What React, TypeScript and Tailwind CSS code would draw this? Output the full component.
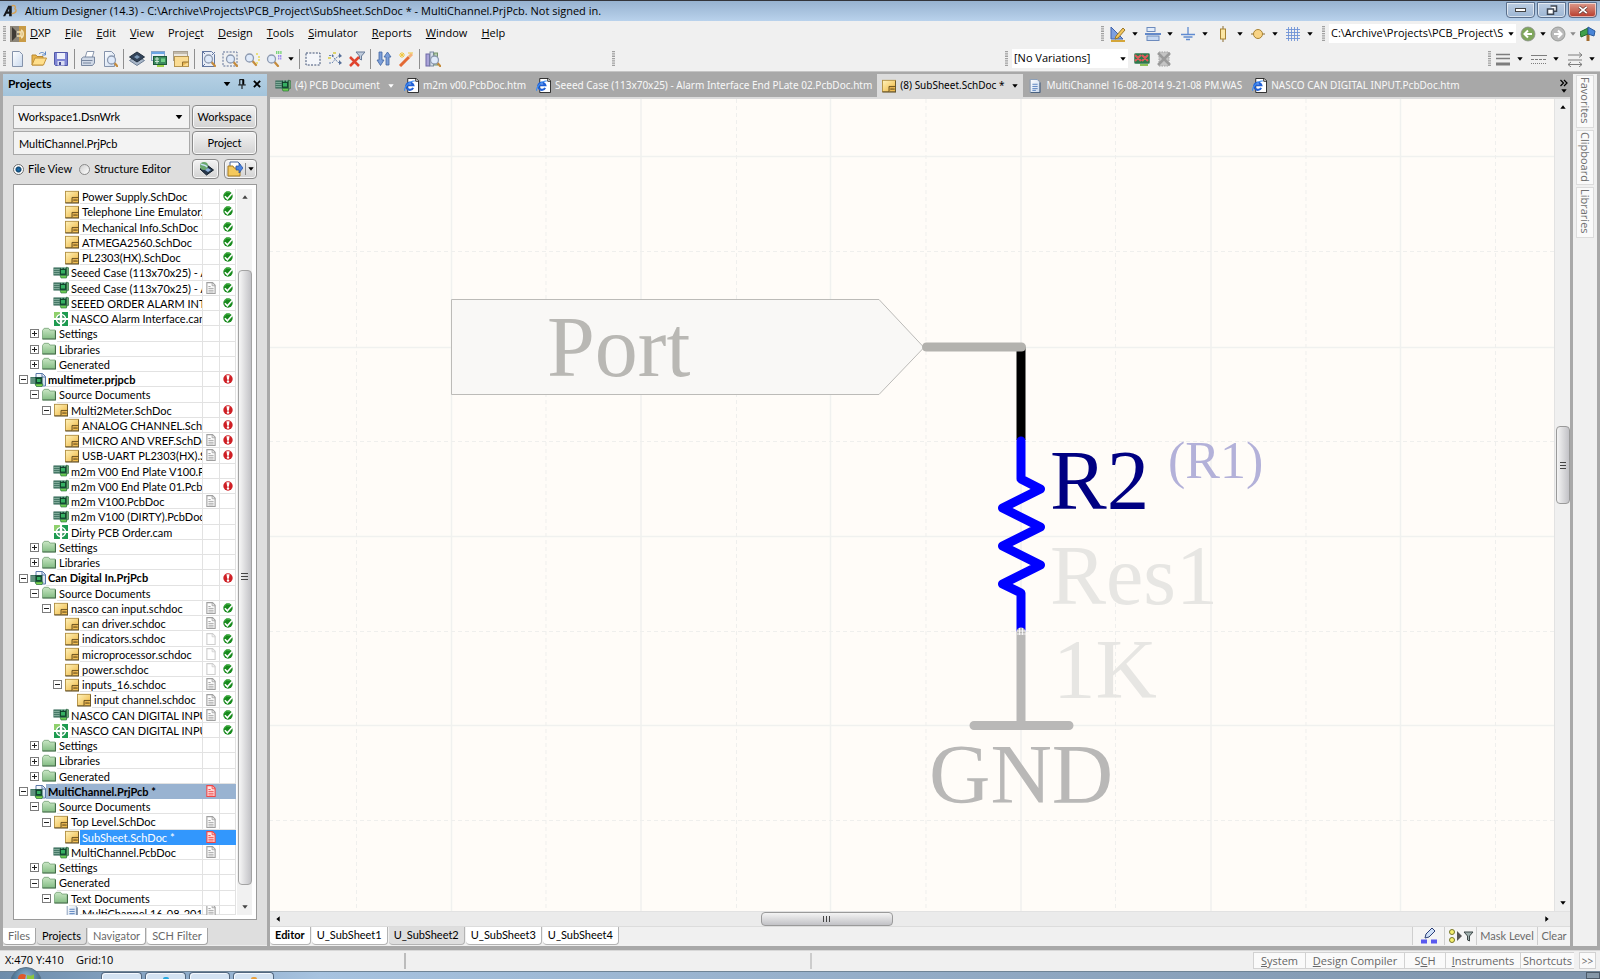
import React, { ReactNode } from "react";

/* ---------- small shared drawings ---------- */

type IconProps = { children: ReactNode; className?: string };

function Icon({ children, className = "h-4 w-4" }: IconProps) {
  return (
    <svg viewBox="0 0 16 16" className={`shrink-0 ${className}`} aria-hidden="true">
      {children}
    </svg>
  );
}

function Caret({ className = "text-black" }: { className?: string }) {
  return (
    <svg viewBox="0 0 6 4" className={`h-1 w-1.5 shrink-0 ${className}`} aria-hidden="true">
      <path d="M0.3 0.3h5.4L3 3.7z" fill="currentColor" />
    </svg>
  );
}

function Grip() {
  return (
    <svg viewBox="0 0 3 16" className="h-4 w-[3px] shrink-0" aria-hidden="true">
      <path d="M1.5 0v16" stroke="#a0a0a0" strokeWidth="3" strokeDasharray="1.3 1" />
    </svg>
  );
}

function Gradients() {
  return (
    <svg className="absolute h-0 w-0" aria-hidden="true">
      <defs>
        <linearGradient id="gold" x1="0" y1="0" x2="1" y2="1">
          <stop offset="0" stopColor="#fff3bd" />
          <stop offset="1" stopColor="#efb53c" />
        </linearGradient>
        <linearGradient id="green" x1="0" y1="0" x2="0" y2="1">
          <stop offset="0" stopColor="#c9e6c4" />
          <stop offset="1" stopColor="#84bd84" />
        </linearGradient>
        <linearGradient id="paper" x1="0" y1="0" x2="1" y2="1">
          <stop offset="0" stopColor="#ffffff" />
          <stop offset="1" stopColor="#c9d9ee" />
        </linearGradient>
        <radialGradient id="orb" cx="0.5" cy="0.3" r="0.7">
          <stop offset="0" stopColor="#8fb4cf" />
          <stop offset="1" stopColor="#1d4a70" />
        </radialGradient>
      </defs>
    </svg>
  );
}

const SheetIcon = () => (
  <Icon className="h-3.5 w-3.5">
    <rect x="0.5" y="1.5" width="15" height="13" fill="url(#gold)" stroke="#b08c3c" />
    <path d="M0.500 14.800h15.200V2" fill="none" stroke="#5d4c28" strokeWidth="1.200" />
    <path d="M8 14.500V8.500h7.500" fill="#e3b050" stroke="#5d471a" />
    <path d="M9.500 11.500h5" stroke="#5d471a" strokeWidth="1.200" />
  </Icon>
);

const BoardIcon = () => (
  <Icon className="h-4 w-4">
    <rect x="0.500" y="2.500" width="14" height="8" fill="#1c5442" />
    <path d="M0.500 4.500h6M0.500 6.500h6M0.500 8.500h6M2 2.500v8M4 2.500v8M6 2.500v8" stroke="#a9ccbd" strokeWidth="0.600" />
    <rect x="7.500" y="4.500" width="5" height="4.500" fill="#35b062" stroke="#0f3a24" strokeWidth="0.800" />
    <path d="M8 3h1.500M11 3h1.500" stroke="#9be0b4" />
    <path d="M13.500 2l2.500 1v7l-2.500 1.500z" fill="#6aa674" stroke="#1f5230" strokeWidth="0.500" />
    <path d="M7 10.500h6.500v2.500H8z" fill="#6ccb52" stroke="#1c6b30" strokeWidth="0.600" />
  </Icon>
);

const ProjectIcon = () => (
  <Icon className="h-4 w-4">
    <path d="M6 1.500h6.500l3 3V14H6z" fill="url(#paper)" stroke="#5a78a8" />
    <path d="M12 1.500v3.500h3.500" fill="none" stroke="#5a78a8" />
    <rect x="0.500" y="5" width="12" height="7" fill="#1c5442" />
    <path d="M0.500 7h5M0.500 9h5M0.500 11h5M2 5v7M4 5v7" stroke="#a9ccbd" strokeWidth="0.600" />
    <rect x="6.500" y="6.500" width="4.500" height="4" fill="#35b062" stroke="#0f3a24" strokeWidth="0.800" />
    <path d="M5 12h8l-1 2.500H6.500z" fill="#7ed44e" stroke="#1c6b30" strokeWidth="0.600" />
  </Icon>
);

const FolderIcon = () => (
  <Icon className="h-3.5 w-3.5">
    <path d="M0.500 13.500v-9.500l2-2.500h5l1.500 2h6v10z" fill="url(#green)" stroke="#7aa67c" />
    <path d="M0.500 13.800h15V4" fill="none" stroke="#3f6b45" strokeWidth="1.200" />
  </Icon>
);

const CamIcon = () => (
  <Icon className="h-3.5 w-3.5">
    <rect width="16" height="16" fill="#1d9b50" />
    <rect width="8" height="8" fill="#8fd06c" />
    <circle cx="8" cy="8" r="6" fill="#ffffff" />
    <path d="M8 0v16M0 8h16" stroke="#fff" strokeWidth="2.500" />
    <path d="M3.500 6.500L6.500 3.500v3zM12.500 6.500L9.500 3.500v3zM3.500 9.500l3 3v-3zM12.500 9.500l-3 3v-3z" fill="#0e7c3c" />
  </Icon>
);

const TextDocIcon = () => (
  <Icon className="h-3.5 w-3.5">
    <path d="M2.500 0.500h8l3 3v12h-11z" fill="url(#paper)" stroke="#7f96b4" />
    <path d="M5 6h6M5 8.500h6M5 11h6M5 13h4" stroke="#4d78b8" />
    <path d="M13.800 4v11.500H3" fill="none" stroke="#3d5573" />
  </Icon>
);

const IeIcon = () => (
  <Icon className="h-[15px] w-[15px]">
    <path d="M4 0.500h9l2.500 2.500v12.500H4z" fill="#fff" stroke="#222" />
    <path d="M12.500 0.500v3h3" fill="none" stroke="#222" />
    <path d="M9.700 10.500A3.900 3.900 0 1 1 10 7.800H3.200" fill="none" stroke="#1e5fd6" strokeWidth="2.200" />
    <path d="M0.800 13.500C-0.500 10.500 6 2.500 11.500 3.200" fill="none" stroke="#3f8df0" strokeWidth="1.200" />
  </Icon>
);

type Mark = "lines" | "blank" | "red";

function MarkIcon({ mark }: { mark: Mark }) {
  const stroke = mark === "red" ? "#f04646" : mark === "blank" ? "#cfcfcf" : "#a0a0a0";
  return (
    <Icon className="h-3 w-3">
      <path d="M2.500 0.800h7.500l3.500 3.500v11h-11z" fill={mark === "red" ? "#ffe4e4" : "#fff"} stroke={stroke} strokeWidth="1.500" />
      <path d="M9.500 1v4h4" fill="none" stroke={stroke} strokeWidth="1.200" />
      {mark !== "blank" && <path d="M4.500 6h3M4.500 8.500h7M4.500 11h7M4.500 13.300h7" stroke={stroke} strokeWidth="1.200" />}
    </Icon>
  );
}

function StatusIcon({ ok }: { ok: boolean }) {
  return ok ? (
    <Icon className="h-2.5 w-2.5">
      <circle cx="8" cy="8" r="7.500" fill="#178a1c" />
      <path d="M3 8.500l4 4L14.500 4" fill="none" stroke="#fff" strokeWidth="2.500" />
      <path d="M2 5a7 7 0 0 1 9-3" fill="none" stroke="#5fc25c" strokeWidth="1.500" />
    </Icon>
  ) : (
    <Icon className="h-2.5 w-2.5">
      <circle cx="8" cy="8" r="7.500" fill="#cf1f25" />
      <path d="M5.500 2h5L9.300 9.300H6.700z" fill="#fff" />
      <circle cx="8" cy="12" r="1.900" fill="#fff" />
    </Icon>
  );
}

/* ---------- toolbar drawings ---------- */

const lens = (
  <>
    <path d="M11.500 11l3.500 4" stroke="#c58b3c" strokeWidth="2.200" strokeLinecap="round" />
    <circle cx="8.500" cy="8" r="4" fill="#dfeafa" stroke="#8d9ab0" strokeWidth="1.300" />
  </>
);

const toolbarGroups: { name: string; art: ReactNode; caret?: boolean }[][] = [
  [
    { name: "New", art: <path d="M3.500 0.500h7l3 3v12h-10z" fill="url(#paper)" stroke="#8593ab" /> },
    {
      name: "Open",
      art: (
        <>
          <path d="M1 14V4h4l1 1.500h6V14z" fill="#e9b54c" stroke="#b98930" />
          <path d="M1 14l3-7h11.500L12.500 14z" fill="#ffdf8c" stroke="#c2923a" />
          <path d="M8 3c2-2 4-2 6 0M14.500 0.500V4H11" fill="none" stroke="#5b87c4" />
        </>
      ),
    },
    {
      name: "Save",
      art: (
        <>
          <path d="M1.500 1.500h13v13h-12l-1-1z" fill="#7f86d4" stroke="#5158a8" />
          <rect x="4" y="2" width="8" height="6" fill="#eef1fb" />
          <rect x="4.500" y="10" width="7" height="4.500" fill="#d9dcf2" />
          <rect x="6" y="11" width="2" height="3" fill="#454b96" />
        </>
      ),
    },
  ],
  [
    {
      name: "Print",
      art: (
        <>
          <path d="M5 7l2-6.500h7L12 7z" fill="#fff" stroke="#8a97ad" />
          <path d="M1.500 7.500l2-1.500h11v6l-2 2.500h-11z" fill="#cfd8e6" stroke="#7887a0" />
          <path d="M1.500 9.500h11M3 12h8" stroke="#7887a0" />
        </>
      ),
    },
    {
      name: "Print Preview",
      art: (
        <>
          <path d="M2.500 0.500h7l3 3v12h-10z" fill="url(#paper)" stroke="#8593ab" />
          <g transform="translate(1 1)">{lens}</g>
        </>
      ),
    },
  ],
  [
    {
      name: "Devices",
      art: (
        <>
          <path d="M0.500 9.500L8 14.500l7.500-5L8 5z" fill="#a8b6c8" stroke="#6f8096" />
          <path d="M0.500 6L8 11l7.500-5L8 1z" fill="#33445a" stroke="#22303f" />
          <path d="M5 6l3-2 3 2-3 2z" fill="#7b99b8" />
        </>
      ),
    },
    {
      name: "Board View",
      art: (
        <>
          <rect x="0.500" y="0.500" width="13" height="9" fill="#e6eefa" stroke="#8aa3c4" />
          <path d="M0.500 2h13" stroke="#6ba6e4" strokeWidth="2" />
          <rect x="2.500" y="5.500" width="13" height="8" fill="#3c8a5e" stroke="#1d5a38" />
          <path d="M4 8h4M4 10.500h4M6 6v7" stroke="#cde6d4" />
          <rect x="10" y="7.500" width="4" height="3.500" fill="#6fd088" />
          <path d="M6 15h7" stroke="#9ccf4a" strokeWidth="2" />
        </>
      ),
    },
    {
      name: "Sheet View",
      art: (
        <>
          <rect x="0.500" y="0.500" width="14" height="9" fill="#ebe7df" stroke="#a89f90" />
          <path d="M1 2h13" stroke="#b3aa9a" strokeWidth="1.500" />
          <rect x="1.500" y="5.500" width="14" height="10" fill="#fbdc93" stroke="#b59450" />
          <path d="M9.500 15v-4h6" fill="#e8b652" stroke="#94712f" />
        </>
      ),
    },
  ],
  [
    {
      name: "Fit Document",
      art: (
        <>
          <path d="M2.500 0.500h9l3 3v12h-12z" fill="#e9eef8" stroke="#6377a0" />
          <path d="M5 3L2 0M12 4l3-3M5 13l-3 3" stroke="#6377a0" />
          {lens}
        </>
      ),
    },
    {
      name: "Zoom Area",
      art: (
        <>
          <rect x="1" y="1" width="14" height="14" fill="none" stroke="#5e7096" strokeDasharray="2 1.300" />
          {lens}
        </>
      ),
    },
    {
      name: "Zoom Selected",
      art: (
        <>
          <g transform="translate(-3 -1)">{lens}</g>
          <path d="M12 3h2M14 6h2M12 12h2M14 9h2" stroke="#e9de7c" strokeWidth="2" />
        </>
      ),
    },
    {
      name: "Zoom Filtered",
      caret: true,
      art: (
        <>
          <g transform="translate(-3 0)">{lens}</g>
          <path d="M10 1.500h6" stroke="#7ed47e" strokeWidth="3" strokeDasharray="1.200 0.600" />
          <path d="M12 5h4M12 7.500h4" stroke="#a292ee" strokeWidth="2" strokeDasharray="1.200 0.600" />
        </>
      ),
    },
  ],
  [
    { name: "Select Inside Area", art: <rect x="1" y="2" width="14" height="12" fill="#f4f6fa" stroke="#3f5174" strokeDasharray="2 1.300" /> },
    {
      name: "Move Selection",
      art: (
        <>
          <path d="M2 4.500h3l6 7h3M2 12h3l6-7h3" fill="none" stroke="#6a86b2" strokeDasharray="2 1" />
          <path d="M5 3l2 2-2 1zM12 2l3 3-3 2zM12 9l3 3-3 2z" fill="#576f98" />
          <path d="M1 7h3M6 2h3" stroke="#ddd36c" strokeWidth="2" />
        </>
      ),
    },
    {
      name: "Clear Filter",
      art: (
        <>
          <path d="M7 1h9l-3.500 4v4l-2-1V5z" fill="#c0ccdc" stroke="#687b98" />
          <path d="M1 6l9 9M10 6l-9 9" stroke="#e0442f" strokeWidth="2.500" />
        </>
      ),
    },
  ],
  [
    {
      name: "Hierarchy",
      art: (
        <>
          <path d="M3 1h3v8h2l-3.500 5.500L1 9h2z" fill="#7c9fda" stroke="#41669f" strokeWidth="0.800" />
          <path d="M10 14h3V6h2l-3.500-5L8 6h2z" fill="#7c9fda" stroke="#41669f" strokeWidth="0.800" />
        </>
      ),
    },
    {
      name: "Cross Probe",
      art: (
        <>
          <path d="M2 15l9-9" stroke="#e36a35" strokeWidth="3" />
          <path d="M11 6l3-3" stroke="#f6b27a" strokeWidth="3" />
          <path d="M4 1v6M1 4h6M2 2l4 4M6 2L2 6M10 2h5" stroke="#f0c63c" />
        </>
      ),
    },
  ],
  [
    {
      name: "Browse Library",
      art: (
        <>
          <rect x="1" y="3" width="3.500" height="12" fill="#a9a3d8" stroke="#6f68a6" />
          <rect x="5" y="1" width="3.500" height="14" fill="#d7dfea" stroke="#7d8ca4" />
          <rect x="9" y="2" width="3.500" height="12" fill="#b8d0b0" stroke="#73916c" />
          <g transform="translate(1 1)">{lens}</g>
        </>
      ),
    },
  ],
];

const drawingTools: { name: string; art: ReactNode }[] = [
  {
    name: "Utilities",
    art: (
      <>
        <path d="M1 1v12h12z" fill="#7d9fdf" stroke="#3e62ac" />
        <path d="M6 10L13 2l2 2-7 8-3 1z" fill="#f3c65c" stroke="#9a7728" />
        <path d="M1 15h14" stroke="#d4a63a" strokeWidth="2" />
      </>
    ),
  },
  {
    name: "Alignment",
    art: (
      <>
        <rect x="2" y="1.500" width="8" height="4" fill="#e2ecfa" stroke="#6d8bbd" />
        <path d="M0 8h16" stroke="#3567bd" strokeWidth="1.500" />
        <rect x="2" y="10" width="12" height="4.500" fill="#c5d8f3" stroke="#6d8bbd" />
      </>
    ),
  },
  { name: "Power", art: <path d="M8 1v7M1 8.500h14M3.500 11h9M6 13.500h4" stroke="#5f8ad0" strokeWidth="1.300" /> },
  {
    name: "Digital Devices",
    art: (
      <>
        <path d="M8 0v16" stroke="#8a6d30" />
        <rect x="5.500" y="3" width="5" height="10" fill="#fbe6a4" stroke="#a88334" />
      </>
    ),
  },
  {
    name: "Simulation Sources",
    art: (
      <>
        <path d="M1 8h14" stroke="#8a6d30" />
        <circle cx="8" cy="8" r="4.500" fill="#f8d486" stroke="#a88334" />
      </>
    ),
  },
  { name: "Grids", art: <path d="M3.500 1v14M6.500 1v14M9.500 1v14M12.500 1v14M1 3.500h14M1 6.500h14M1 9.500h14M1 12.500h14" stroke="#6f93d6" strokeWidth="0.900" /> },
];

/* ---------- title, menu and tool bars ---------- */

function TitleBar() {
  const frame =
    "flex h-4 items-center justify-center rounded-b-sm border border-[#5a6f8c] shadow-[inset_0_0_0_1px_rgba(255,255,255,0.6)]";
  return (
    <header className="flex h-[21px] shrink-0 items-center border-t border-[#33343a] bg-linear-to-b from-[#97b2d0] to-[#b9d2ec] px-[3px]">
      <Icon className="h-[14px] w-[14px]">
        <path d="M0 14L6 2h4v12H7v-3H4l-1.500 3zM5.300 8.500H7V5z" fill="#16181c" fillRule="evenodd" />
        <path d="M10 2c4-1 5 1 3.500 3.500 2.500 1 2 5-3.500 5.500" fill="none" stroke="#d5a256" strokeWidth="1.600" />
      </Icon>
      <h1 className="flex-1 truncate pl-2 text-[11px]">
        Altium Designer (14.3) - C:\Archive\Projects\PCB_Project\SubSheet.SchDoc * - MultiChannel.PrjPcb. Not signed in.
      </h1>
      <div className="flex gap-0.5 pb-0.5">
        <button aria-label="Minimize" className={`${frame} w-[29px] bg-linear-to-b from-[#bccde2] to-[#9db6d3]`}>
          <span className="h-1 w-[11px] border border-[#444] bg-white" />
        </button>
        <button aria-label="Restore" className={`${frame} w-[29px] bg-linear-to-b from-[#bccde2] to-[#9db6d3]`}>
          <Icon className="h-3 w-3">
            <path d="M6 2.500h8v7h-3M2 6.500h8v7H2z" fill="#fff" stroke="#3d4653" strokeWidth="2" />
          </Icon>
        </button>
        <button aria-label="Close" className={`${frame} w-[29px] bg-linear-to-b from-[#dd9a8c] to-[#b5382a]`}>
          <Icon className="h-2.5 w-3">
            <path d="M2 3l12 10M14 3L2 13" stroke="#54302c" strokeWidth="5" />
            <path d="M2 3l12 10M14 3L2 13" stroke="#fff" strokeWidth="3" />
          </Icon>
        </button>
      </div>
    </header>
  );
}

const menus: [string, string, string][] = [
  ["", "F", "ile"],
  ["", "E", "dit"],
  ["", "V", "iew"],
  ["Proje", "c", "t"],
  ["", "D", "esign"],
  ["", "T", "ools"],
  ["", "S", "imulator"],
  ["", "R", "eports"],
  ["", "W", "indow"],
  ["", "H", "elp"],
];

function ArrowBall({ color, flip }: { color: string; flip?: boolean }) {
  return (
    <Icon>
      <circle cx="8" cy="8" r="7" fill={color} stroke="#8b8f8b" strokeWidth="0.800" />
      <path d={flip ? "M4 8h7M8 4.500L11.500 8 8 11.500" : "M12 8H5M8 4.500L4.500 8 8 11.500"} fill="none" stroke="#fff" strokeWidth="2" />
    </Icon>
  );
}

function MenuBar() {
  return (
    <div className="flex h-[26px] shrink-0 items-center bg-[#f0f0f0] pr-1 pb-px pl-[3px] text-[11px]">
      <Grip />
      <nav className="flex items-center gap-[14px] pl-1" aria-label="Main menu">
        <button className="flex items-center gap-1">
          <Icon className="h-4 w-4">
            <rect width="16" height="16" fill="#c99b45" />
            <rect width="9" height="16" fill="#8d8679" />
            <path d="M2 1l4 4v6l-4 4z" fill="#3e3a35" />
            <path d="M7 6h4v4H7M11 4c3 1 3 7 0 8" fill="none" stroke="#f4e3b6" strokeWidth="1.500" />
          </Icon>
          <span>
            <u>D</u>XP
          </span>
        </button>
        {menus.map(([before, key, after]) => (
          <button key={key + after}>
            {before}
            <u>{key}</u>
            {after}
          </button>
        ))}
      </nav>
      <div className="ml-auto flex items-center">
        <Grip />
        <div className="flex pr-1 pl-1">
          {drawingTools.map((tool) => (
            <button key={tool.name} aria-label={tool.name} className="flex w-[35px] items-center gap-1.5 pl-0.5">
              <Icon>{tool.art}</Icon>
              <Caret />
            </button>
          ))}
        </div>
        <Grip />
        <label className="relative mx-1 flex items-center">
          <span className="sr-only">Document path</span>
          <select className="h-[19px] w-[187px] appearance-none bg-white pl-0.5 text-[11px]">
            <option>C:\Archive\Projects\PCB_Project\S</option>
          </select>
          <span className="pointer-events-none absolute right-0.5">
            <Caret />
          </span>
        </label>
        <button aria-label="Back" className="flex items-center gap-1">
          <ArrowBall color="#7fa65c" />
          <Caret />
        </button>
        <button aria-label="Forward" className="flex items-center gap-1 pl-1">
          <ArrowBall color="#b9b9b9" flip />
          <Caret className="text-[#8a8a8a]" />
        </button>
        <button aria-label="Home" className="pl-1">
          <Icon>
            <path d="M8 3v12" stroke="#a06b2e" strokeWidth="3" />
            <path d="M8 8L1 11l-1-5 8-4z" fill="#3fa04a" stroke="#22692c" />
            <path d="M8 1l7 4-1 5-6-2z" fill="#4a86d8" stroke="#2a5a9c" />
          </Icon>
        </button>
      </div>
    </div>
  );
}

function ToolBar() {
  return (
    <div className="flex h-6 shrink-0 items-center bg-[#f0f0f0] pr-[5px] pb-px pl-[3px]">
      <div className="flex flex-1 items-center">
        <Grip />
        {toolbarGroups.map((group, index) => (
          <div key={group[0].name} className="flex items-center">
            {index > 0 && <span className="mx-0.5 h-5 w-px bg-[#8f8f8f]" />}
            {group.map((tool) => (
              <button key={tool.name} aria-label={tool.name} className="flex h-5 items-center justify-center gap-1.5 px-[3px]">
                <Icon>{tool.art}</Icon>
                {tool.caret && <Caret />}
              </button>
            ))}
          </div>
        ))}
        <span className="ml-[168px]">
          <Grip />
        </span>
      </div>
      <div className="flex items-center gap-1">
        <Grip />
        <label className="relative flex items-center">
          <span className="sr-only">Variant</span>
          <select className="h-[19px] w-[116px] appearance-none bg-white px-0.5 text-[11px]">
            <option>[No Variations]</option>
          </select>
          <span className="pointer-events-none absolute right-0.5">
            <Caret />
          </span>
        </label>
        <button aria-label="Show variant" className="px-0.5">
          <Icon>
            <rect x="0.500" y="2.500" width="15" height="10" rx="1" fill="#2c7a4c" stroke="#5c9474" />
            <path d="M6 14h8" stroke="#8cc058" strokeWidth="2" />
            <path d="M1 4l6 6M7 4l-6 6M8 4l6 6M14 4l-6 6" stroke="#e05a5a" strokeWidth="2" />
          </Icon>
        </button>
        <button aria-label="Hide variant">
          <Icon>
            <rect x="3" y="1" width="10" height="14" fill="#c4c4c4" stroke="#a2a2a2" strokeDasharray="1.500 1" />
            <path d="M2 2l12 12M14 2L2 14" stroke="#9a9a9a" strokeWidth="2.500" />
          </Icon>
        </button>
      </div>
      <div className="ml-[316px] flex items-center text-[#7d7d7d]">
        <Grip />
        <button aria-label="Line width" className="flex w-9 items-center gap-1.5 pl-1">
          <Icon>
            <path d="M1 3.500h14M1 7.500h14" stroke="currentColor" strokeWidth="1.500" />
            <path d="M1 13h14" stroke="currentColor" strokeWidth="3" />
          </Icon>
          <Caret />
        </button>
        <button aria-label="Line style" className="flex w-9 items-center gap-1.5 pl-1">
          <Icon>
            <path d="M0 4.500h16" stroke="currentColor" />
            <path d="M0 8.500h16" stroke="currentColor" strokeDasharray="3 1" />
            <path d="M0 12.500h16" stroke="currentColor" strokeDasharray="1 1" />
          </Icon>
          <Caret />
        </button>
        <button aria-label="Arrow style" className="flex items-center gap-1.5 pl-1">
          <Icon>
            <path d="M1 4h14M12 1.500L15 4l-3 2.500M1 9h14M1 13.500h14M4 11l-3 2.500L4 16M12 11l3 2.500L12 16" fill="none" stroke="currentColor" />
          </Icon>
          <Caret />
        </button>
      </div>
    </div>
  );
}

/* ---------- projects panel ---------- */

type Kind = "sheet" | "board" | "project" | "folder" | "cam" | "text";
type Row = {
  label: string;
  depth: number;
  kind: Kind;
  toggle?: "+" | "-";
  mark?: Mark;
  ok?: boolean;
  state?: "active" | "selected";
};

const row = (depth: number, kind: Kind, label: string, rest: Partial<Row> = {}): Row => ({ depth, kind, label, ...rest });
const open = { toggle: "-" as const };
const shut = { toggle: "+" as const };
const good = { ok: true };
const bad = { ok: false };
const lines = { mark: "lines" as const };
const blank = { mark: "blank" as const };

const rows: Row[] = [
  row(3, "sheet", "Power Supply.SchDoc", good),
  row(3, "sheet", "Telephone Line Emulator.SchDoc", good),
  row(3, "sheet", "Mechanical Info.SchDoc", good),
  row(3, "sheet", "ATMEGA2560.SchDoc", good),
  row(3, "sheet", "PL2303(HX).SchDoc", good),
  row(2, "board", "Seeed Case (113x70x25) - Alarm", good),
  row(2, "board", "Seeed Case (113x70x25) - Alarm", { ...lines, ...good }),
  row(2, "board", "SEEED ORDER ALARM INTERFACE", good),
  row(2, "cam", "NASCO Alarm Interface.cam", good),
  row(1, "folder", "Settings", shut),
  row(1, "folder", "Libraries", shut),
  row(1, "folder", "Generated", shut),
  row(0, "project", "multimeter.prjpcb", { ...open, ...bad }),
  row(1, "folder", "Source Documents", open),
  row(2, "sheet", "Multi2Meter.SchDoc", { ...open, ...bad }),
  row(3, "sheet", "ANALOG CHANNEL.SchDoc", bad),
  row(3, "sheet", "MICRO AND VREF.SchDoc", { ...lines, ...bad }),
  row(3, "sheet", "USB-UART PL2303(HX).SchDoc", { ...lines, ...bad }),
  row(2, "board", "m2m V00 End Plate V100.PcbDoc"),
  row(2, "board", "m2m V00 End Plate 01.PcbDoc", bad),
  row(2, "board", "m2m V100.PcbDoc", lines),
  row(2, "board", "m2m V100 (DIRTY).PcbDoc"),
  row(2, "cam", "Dirty PCB Order.cam"),
  row(1, "folder", "Settings", shut),
  row(1, "folder", "Libraries", shut),
  row(0, "project", "Can Digital In.PrjPcb", { ...open, ...bad }),
  row(1, "folder", "Source Documents", open),
  row(2, "sheet", "nasco can input.schdoc", { ...open, ...lines, ...good }),
  row(3, "sheet", "can driver.schdoc", { ...lines, ...good }),
  row(3, "sheet", "indicators.schdoc", { ...blank, ...good }),
  row(3, "sheet", "microprocessor.schdoc", { ...blank, ...good }),
  row(3, "sheet", "power.schdoc", { ...blank, ...good }),
  row(3, "sheet", "inputs_16.schdoc", { ...open, ...lines, ...good }),
  row(4, "sheet", "input channel.schdoc", { ...lines, ...good }),
  row(2, "board", "NASCO CAN DIGITAL INPUT.PcbDoc", { ...lines, ...good }),
  row(2, "cam", "NASCO CAN DIGITAL INPUT.cam", good),
  row(1, "folder", "Settings", shut),
  row(1, "folder", "Libraries", shut),
  row(1, "folder", "Generated", shut),
  row(0, "project", "MultiChannel.PrjPcb *", { ...open, mark: "red", state: "active" }),
  row(1, "folder", "Source Documents", open),
  row(2, "sheet", "Top Level.SchDoc", { ...open, ...lines }),
  row(3, "sheet", "SubSheet.SchDoc *", { mark: "red", state: "selected" }),
  row(2, "board", "MultiChannel.PcbDoc", lines),
  row(1, "folder", "Settings", shut),
  row(1, "folder", "Generated", open),
  row(2, "folder", "Text Documents", open),
  row(3, "text", "MultiChannel 16-08-2014 9-21-08", lines),
];

const kindIcon: Record<Kind, ReactNode> = {
  sheet: <SheetIcon />,
  board: <BoardIcon />,
  project: <ProjectIcon />,
  folder: <FolderIcon />,
  cam: <CamIcon />,
  text: <TextDocIcon />,
};

const indent = ["pl-1", "pl-[15px]", "pl-[27px]", "pl-[38px]", "pl-[50px]"];

function TreeRow({ item }: { item: Row }) {
  const fill =
    item.state === "active"
      ? "bg-[#99b3d1] border-[#99b3d1]"
      : item.state === "selected"
        ? "bg-[#3297fd] border-[#3297fd] text-white"
        : "border-[#e2e2e2]";
  return (
    <li role="treeitem" aria-level={item.depth + 1} className="flex min-h-0 items-stretch overflow-hidden leading-[15px]">
      <div className={`flex min-w-0 flex-1 items-center ${indent[item.depth]}`}>
        {item.toggle ? (
          <button
            aria-label={item.toggle === "-" ? "Collapse" : "Expand"}
            className="flex h-[9px] w-[9px] shrink-0 items-center justify-center border border-[#7c7c7c] bg-white"
          >
            <svg viewBox="0 0 5 5" className="h-[5px] w-[5px]">
              <path d={item.toggle === "-" ? "M0 2.500h5" : "M0 2.500h5M2.500 0v5"} stroke="#222" />
            </svg>
          </button>
        ) : (
          <span className="w-[9px] shrink-0" />
        )}
        <span className="ml-0.5 flex w-4 shrink-0 justify-center">{kindIcon[item.kind]}</span>
        <span
          className={`h-full min-w-0 flex-1 overflow-hidden border-b pl-0.5 whitespace-nowrap ${item.depth === 0 ? "font-bold" : ""} ${fill}`}
        >
          {item.label}
        </span>
      </div>
      <span className={`flex w-[17px] shrink-0 items-center justify-center border-b border-l ${fill}`}>
        {item.mark && <MarkIcon mark={item.mark} />}
      </span>
      <span className={`flex w-[17px] shrink-0 items-center justify-center border-r border-b border-l ${fill}`}>
        {item.ok !== undefined && <StatusIcon ok={item.ok} />}
      </span>
    </li>
  );
}

const panelButton =
  "flex items-center justify-center rounded-sm border border-[#8a8a8a] bg-linear-to-b from-[#f4f4f4] to-[#d2d2d2] shadow-[inset_0_0_0_1px_#f8f8f8]";

function ProjectsPanel() {
  return (
    <aside className="flex w-[264px] shrink-0 flex-col bg-[#dedede] font-['Lato','Open_Sans',sans-serif] text-[11px]">
      <div className="flex h-[22px] shrink-0 items-center bg-linear-to-b from-[#b5d0e4] to-[#a3c4db] px-[5px] pb-0.5">
        <h2 className="flex-1 text-xs font-bold">Projects</h2>
        <div className="flex items-center gap-[5px]">
          <button aria-label="Panel menu" className="pr-0.5">
            <Caret className="scale-125 text-black" />
          </button>
          <button aria-label="Pin">
            <Icon className="h-2.5 w-2.5">
              <path d="M4.500 1v8M4 1h7M2 9.500h12M8 10v6" stroke="#000" strokeWidth="1.600" fill="none" />
              <path d="M10 1v8" stroke="#000" strokeWidth="3.200" />
            </Icon>
          </button>
          <button aria-label="Close panel">
            <Icon className="h-2.5 w-2.5">
              <path d="M3 3l10 10M13 3L3 13" stroke="#000" strokeWidth="3" />
            </Icon>
          </button>
        </div>
      </div>

      <div className="flex min-h-0 flex-1 flex-col px-[10px] pt-[9px] pb-2">
        <div className="grid grid-cols-[1fr_65px] gap-x-0.5 gap-y-0.5">
          <label className="relative flex items-center">
            <span className="sr-only">Workspace</span>
            <select className="h-6 w-full appearance-none border border-[#a9a9a9] bg-[#f3f3f3] px-1">
              <option>Workspace1.DsnWrk</option>
            </select>
            <span className="pointer-events-none absolute right-2">
              <Caret className="scale-125 text-black" />
            </span>
          </label>
          <button className={`${panelButton} h-6`}>Workspace</button>
          <input
            aria-label="Project"
            defaultValue="MultiChannel.PrjPcb"
            className="h-6 w-full min-w-0 border border-[#a9a9a9] bg-[#f3f3f3] px-[5px]"
          />
          <button className={`${panelButton} h-6`}>Project</button>
        </div>

        <div className="mt-1 flex h-5 items-center">
          <label className="flex items-center gap-1">
            <input
              type="radio"
              name="view"
              defaultChecked
              className="h-[11px] w-[11px] appearance-none rounded-full border border-[#6d6d6d] bg-white checked:bg-[radial-gradient(circle,#1b75bc_0,#12476f_40%,#fff_55%)]"
            />
            File View
          </label>
          <label className="ml-[7px] flex items-center gap-1">
            <input
              type="radio"
              name="view"
              className="h-[11px] w-[11px] appearance-none rounded-full border border-[#8a8a8a] bg-linear-to-br from-[#cfcfcf] to-white"
            />
            Structure Editor
          </label>
          <div className="ml-auto flex gap-[5px]">
            <button aria-label="Compile" className={`${panelButton} h-5 w-[27px]`}>
              <Icon>
                <path d="M2 8l6.500 6L15.500 9 9 4z" fill="#27384c" stroke="#101c2a" />
                <circle cx="6" cy="5" r="4" fill="#6ba86f" />
                <path d="M3 3c2 2 4 0 6 3" stroke="#c7e1f5" fill="none" strokeWidth="1.500" />
                <path d="M7 9l3-2 3 2-3 2z" fill="#8eb2dc" />
              </Icon>
            </button>
            <button aria-label="Project options" className={`${panelButton} h-5 w-[33px] gap-0.5`}>
              <Icon>
                <path d="M3 1h8l2 2v9H3z" fill="#fff" stroke="#49669b" />
                <path d="M1 5h5l1 2h6v8H1z" fill="#f4c95c" stroke="#a77d22" />
                <path d="M9 5h3V2l4 5-4 5V9H9z" fill="#4b83df" stroke="#1f4a9a" strokeWidth="0.700" />
              </Icon>
              <span className="h-3 w-px bg-[#888]" />
              <Caret />
            </button>
          </div>
        </div>

        <div className="mt-[5px] flex min-h-0 flex-1 border border-[#9a9a9a] bg-white py-1 pr-1 pl-px">
          <ul
            role="tree"
            aria-label="Projects"
            className="grid min-h-0 flex-1 grid-rows-[repeat(47,minmax(0,1fr))_9px] overflow-hidden"
          >
            {rows.map((item, index) => (
              <TreeRow key={index} item={item} />
            ))}
          </ul>
          <div className="ml-px flex w-[15px] shrink-0 flex-col items-center bg-[#f1f1f1]">
            <span className="flex h-4 items-center">
              <Caret className="rotate-180 text-[#444]" />
            </span>
            <div className="h-[65px]" />
            <div className="flex w-3.5 flex-1 items-center justify-center rounded-sm border border-[#a3a3a3] bg-linear-to-r from-[#f7f7f7] to-[#c2c2c6]">
              <span className="h-[9px] w-[7px] bg-[repeating-linear-gradient(#444_0_1px,transparent_1px_3px)]" />
            </div>
            <span className="flex h-[30px] items-center pt-3.5">
              <Caret className="text-[#444]" />
            </span>
          </div>
        </div>
      </div>

      <div role="tablist" className="flex h-[17px] shrink-0 gap-px">
        {["Files", "Projects", "Navigator", "SCH Filter"].map((name) => (
          <button
            key={name}
            role="tab"
            aria-selected={name === "Projects"}
            className={`flex items-center rounded-b-sm border-r border-b border-[#a6a6a6] px-[5px] ${name === "Projects" ? "bg-[#dedede] text-black" : "bg-white text-[#6a6a6a]"}`}
          >
            {name}
          </button>
        ))}
      </div>
      <div className="h-px shrink-0 bg-[#ececec]" />
    </aside>
  );
}

/* ---------- schematic ---------- */

const solidX = [451.5, 641, 830.5, 1021, 1211, 1400.5];
const dashedX = [356.5, 546, 736.5, 926, 1115.5, 1306, 1495.5];
const solidY = [156.5, 347.5, 536.5, 725.5];
const dashedY = [251.5, 441.5, 631.5, 820.5];

function Schematic() {
  return (
    <svg className="block h-full w-full bg-[#fffcf8]" role="img" aria-label="Schematic sheet">
      <g transform="translate(-270 -99)">
        <g stroke="#f0f1ef" strokeWidth="1.500">
          {solidX.map((x) => (
            <line key={x} x1={x} x2={x} y1="99" y2="2400" />
          ))}
          {solidY.map((y) => (
            <line key={y} x1="269" x2="4000" y1={y} y2={y} />
          ))}
        </g>
        <g stroke="#efefed" strokeDasharray="4 3">
          {dashedX.map((x) => (
            <line key={x} x1={x} x2={x} y1="99" y2="2400" />
          ))}
          {dashedY.map((y) => (
            <line key={y} x1="269" x2="4000" y1={y} y2={y} />
          ))}
        </g>
        <path d="M451.500 299.500H879L924 347.500L879 394.500H451.500z" fill="#f9f8f6" stroke="#bcbbb8" />
        <g fontFamily="'Liberation Serif', serif" fontSize="85">
          <text x="547" y="376" fontSize="86" fill="#b9b8b4">Port</text>
          <text x="1050" y="509" fill="#000082">R2</text>
          <text x="1168" y="478" fontSize="52" fill="#b3b1d9">(R1)</text>
          <text x="1050" y="604" fontSize="84" fill="#e7e6e3">Res1</text>
          <text x="1053" y="698" fill="#e7e6e3">1K</text>
          <text x="929" y="803" fill="#b9b8b7">GND</text>
        </g>
        <g fill="none" strokeWidth="9" strokeLinecap="round" strokeLinejoin="round">
          <path d="M1021 347V440" stroke="#000" strokeLinecap="butt" />
          <path d="M926.500 347H1021.500" stroke="#b3b2ae" />
          <path d="M1021 441V479L1040.500 489L1002.500 508L1040.500 527L1002.500 546L1040.500 565L1002.500 584L1021 593V630" stroke="#0000ff" />
          <path d="M1021 632V725.500M974 725.500H1069" stroke="#b9b8b7" />
        </g>
        <path d="M1017 631h9M1017 634h9M1019.500 628v7M1022.500 628v7" stroke="#fff" strokeWidth="0.800" />
      </g>
    </svg>
  );
}

/* ---------- document area ---------- */

const documents: { name: string; icon: ReactNode; caret?: boolean; active?: boolean }[] = [
  { name: "(4) PCB Document", icon: <BoardIcon />, caret: true },
  { name: "m2m v00.PcbDoc.htm", icon: <IeIcon /> },
  { name: "Seeed Case (113x70x25) - Alarm Interface End PLate 02.PcbDoc.htm", icon: <IeIcon /> },
  { name: "(8) SubSheet.SchDoc *", icon: <SheetIcon />, caret: true, active: true },
  { name: "MultiChannel 16-08-2014 9-21-08 PM.WAS", icon: <TextDocIcon /> },
  { name: "NASCO CAN DIGITAL INPUT.PcbDoc.htm", icon: <IeIcon /> },
];

const arrow = "flex w-[15px] shrink-0 items-center justify-center";

function DocumentArea() {
  const footButton = "flex items-center justify-center border-l border-[#cfcfcf] bg-[#f4f4f4] text-[#6a6a6a]";
  return (
    <main className="flex min-w-0 flex-1 flex-col font-['Lato','Open_Sans',sans-serif] text-[11px]">
      <div
        role="tablist"
        className="flex h-[25px] shrink-0 items-stretch border-b-2 border-[#dcdcdc] font-['Noto_Sans','Open_Sans',sans-serif] text-[10px]"
      >
        {documents.map((doc) => (
          <button
            key={doc.name}
            role="tab"
            aria-selected={!!doc.active}
            className={`flex items-center gap-1 px-[5px] whitespace-nowrap ${doc.active ? "bg-[#dcdcdc] text-black" : "text-[#f8f8f8]"}`}
          >
            {doc.icon}
            {doc.name}
            {doc.caret && (
              <span className="pl-1">
                <Caret className={doc.active ? "text-black" : "text-white"} />
              </span>
            )}
          </button>
        ))}
        <button aria-label="More documents" className="mr-0.5 ml-auto flex flex-col items-center justify-center gap-0.5">
          <Icon className="h-2 w-2">
            <path d="M1 2l6 6-6 6M8 2l6 6-6 6" fill="none" stroke="#000" strokeWidth="2.500" />
          </Icon>
          <Caret />
        </button>
      </div>

      <div className="flex min-h-0 flex-1">
        <div className="min-w-0 flex-1 overflow-hidden">
          <Schematic />
        </div>
        <div className="flex w-4 shrink-0 flex-col items-center border-l border-[#e2e2e2] bg-[#f0f0f0]">
          <span className="flex h-4 items-center">
            <Caret className="rotate-180 text-black" />
          </span>
          <div className="flex-[311]" />
          <div className="flex h-[78px] w-3.5 items-center justify-center rounded-sm border border-[#9a9a9a] bg-linear-to-r from-[#f4f4f4] to-[#c2c2c6]">
            <span className="h-[7px] w-[6px] bg-[repeating-linear-gradient(#444_0_1px,transparent_1px_3px)]" />
          </div>
          <div className="flex-[390]" />
          <span className="flex h-4 items-center">
            <Caret className="text-black" />
          </span>
        </div>
      </div>

      <div className="flex h-[15px] shrink-0 items-center border-t border-[#e2e2e2] bg-[#ebebeb] pr-4">
        <span className={arrow}>
          <Caret className="rotate-90 text-black" />
        </span>
        <div className="flex-[476]" />
        <div className="flex h-3.5 w-[132px] items-center justify-center rounded-sm border border-[#9a9a9a] bg-linear-to-b from-[#f4f4f4] to-[#c2c2c6]">
          <span className="h-[6px] w-[7px] bg-[repeating-linear-gradient(90deg,#444_0_1px,transparent_1px_3px)]" />
        </div>
        <div className="flex-[647]" />
        <span className={arrow}>
          <Caret className="-rotate-90 text-black" />
        </span>
      </div>

      <div className="flex h-5 shrink-0 items-stretch justify-between border-t border-[#dcdcdc] bg-[#f0f0f0] pb-px">
        <div role="tablist" className="flex gap-px">
          {["Editor", "U_SubSheet1", "U_SubSheet2", "U_SubSheet3", "U_SubSheet4"].map((name) => (
            <button
              key={name}
              role="tab"
              aria-selected={name === "Editor"}
              className={`flex items-center rounded-b-sm border-r border-b border-[#b4b4b4] px-[5px] ${name === "Editor" ? "font-bold" : ""} ${name === "U_SubSheet2" ? "bg-[#dedede]" : "bg-white"}`}
            >
              {name}
            </button>
          ))}
        </div>
        <div className="flex">
          <button aria-label="Highlight" className={`${footButton} w-8`}>
            <Icon>
              <path d="M4 10l1-4 6-6 3 3-6 6z" fill="#cfe0f7" stroke="#2c3f78" />
              <path d="M0 13.500h6M10 13.500h6" stroke="#5a5af0" strokeWidth="4" />
            </Icon>
          </button>
          <button aria-label="Filter" className={`${footButton} w-8`}>
            <svg viewBox="0 0 26 14" className="h-3.5 w-[26px]">
              <circle cx="4" cy="3" r="2.500" fill="#f6f06e" stroke="#77772a" />
              <circle cx="4" cy="11" r="2.500" fill="#f6f06e" stroke="#77772a" />
              <path d="M9 2v10l5-5z" fill="#555" />
              <path d="M16 3h9l-3.500 4v5l-2-1V7z" fill="#9fb0ae" stroke="#3d4646" />
            </svg>
          </button>
          <button className={`${footButton} w-[61px]`}>Mask Level</button>
          <button className={`${footButton} w-[33px]`}>Clear</button>
        </div>
      </div>
    </main>
  );
}

function SideTabs() {
  return (
    <div className="flex w-6 shrink-0 flex-col items-center gap-0.5 bg-[#f0f0f0] pt-px text-[11px]">
      {["Favorites", "Clipboard", "Libraries"].map((name) => (
        <button
          key={name}
          className="w-[18px] border border-[#dcdcdc] bg-[#fafafa] pt-px pb-[3px] leading-3 text-[#6f6f6f] [writing-mode:vertical-rl]"
        >
          {name}
        </button>
      ))}
    </div>
  );
}

/* ---------- status bar and taskbar ---------- */

const statusButtons: [string, string, string, string][] = [
  ["", "S", "ystem", "w-[52px]"],
  ["", "D", "esign Compiler", "w-[99px]"],
  ["S", "C", "H", "w-[41px]"],
  ["", "I", "nstruments", "w-[75px]"],
  ["Shortcuts", "", "", "w-[54px]"],
];

function StatusBar() {
  return (
    <footer className="flex h-[21px] shrink-0 items-center border-t border-[#d8d8d8] bg-[#f0f0f0] pr-1 pb-px pl-[5px] text-[11px]">
      <div className="flex h-4 w-[401px] items-center gap-3 border-r-2 border-[#bcbcbc]">
        <span>X:470 Y:410</span>
        <span>Grid:10</span>
      </div>
      <div className="h-4 w-[406px] border-r-2 border-[#cccccc]" />
      <div className="ml-auto flex text-[#666]">
        {statusButtons.map(([before, key, after, width]) => (
          <button key={before + key + after} className={`h-[17px] border border-r-0 border-[#d2d2d2] bg-[#fafafa] leading-[15px] ${width}`}>
            {before}
            {key && <u>{key}</u>}
            {after}
          </button>
        ))}
        <button aria-label="More" className="ml-[5px] h-[17px] w-[17px] border border-[#d2d2d2] bg-[#fafafa] text-[10px] leading-none">
          &gt;&gt;
        </button>
      </div>
    </footer>
  );
}

function Taskbar() {
  const slot = "w-[41px] rounded-t-sm border border-b-0 border-[#52677f] bg-[#d3e2f2] shadow-[inset_1px_1px_0_#f4f9ff]";
  return (
    <div className="relative flex h-2 shrink-0 items-stretch justify-between border-t border-[#6f8496] bg-linear-to-r from-[#6d8cab] from-0% via-[#a7c3e0] via-20% to-[#7f95ad] to-95%">
      <button aria-label="Start" className="absolute -top-[5px] left-[10px] h-[12px] w-8 overflow-hidden">
        <svg viewBox="0 0 32 12" className="block h-3 w-8">
          <circle cx="16" cy="16" r="15.500" fill="url(#orb)" stroke="#5d7488" />
          <path d="M8 12c0-5 4-6 8-4l-1 4z" fill="#e0592b" />
          <path d="M17 8c3 1 5 1 7-1v5h-7z" fill="#8cc63e" />
        </svg>
      </button>
      <div className="flex gap-[3px] pl-[101px]">
        <span className={slot} />
        <span className={`${slot} flex items-end justify-center`}>
          <span className="h-0.5 w-1.5 rounded-t-full bg-[#27a9e0]" />
        </span>
        <span className={slot} />
        <span className={`${slot} flex items-end justify-center`}>
          <span className="h-0.5 w-1.5 rounded-t-full bg-[#e8a040]" />
        </span>
      </div>
      <span className="w-3.5 border border-[#4c5a68] bg-[#8698a8]" />
    </div>
  );
}

export default function App() {
  return (
    <div className="relative flex h-screen flex-col overflow-hidden bg-[#f0f0f0] font-['Open_Sans','Noto_Sans',sans-serif] text-black">
      <Gradients />
      <TitleBar />
      <MenuBar />
      <ToolBar />
      <div className="flex min-h-0 flex-1 gap-[3px] border-t border-[#c4c4c4] bg-[#a8a8a8] px-[3px] pt-0.5 pb-1">
        <ProjectsPanel />
        <DocumentArea />
        <SideTabs />
      </div>
      <StatusBar />
      <Taskbar />
    </div>
  );
}
